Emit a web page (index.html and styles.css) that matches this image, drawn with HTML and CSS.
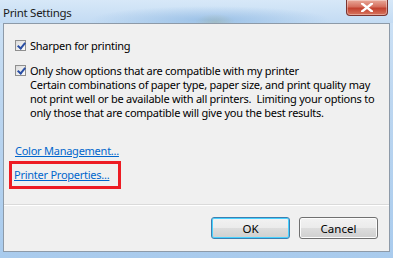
FILE: index.html
```html
<!DOCTYPE html>
<html lang="en">
<head>
    <meta charset="UTF-8">
    <title>Print Settings</title>
    <link rel="stylesheet" href="styles.css">
</head>
<body>
    <div class="window">
        <div class="titlebar">
            <span class="title">Print Settings</span>
            <button class="close-btn" aria-label="Close">
                <svg width="12" height="9" viewBox="0 0 12 9">
                    <path d="M1 0.5 L11 8.5 M11 0.5 L1 8.5" stroke="#fff" stroke-width="2.4" stroke-linecap="square"/>
                </svg>
            </button>
        </div>
        <div class="client">
            <div class="options">
                <label class="check-row">
                    <span class="checkbox checked"></span>
                    <span>Sharpen for printing</span>
                </label>
                <label class="check-row">
                    <span class="checkbox checked"></span>
                    <span>
                        Only show options that are compatible with my printer
                        <span class="note">Certain combinations of paper type, paper size, and print quality may not print well or be available with all printers.&nbsp; Limiting your options to only those that are compatible will give you the best results.</span>
                    </span>
                </label>
            </div>
            <div class="links">
                <a href="#" class="link">Color Management...</a>
                <div class="highlight">
                    <a href="#" class="link">Printer Properties...</a>
                </div>
            </div>
            <div class="footer">
                <button class="btn default">OK</button>
                <button class="btn">Cancel</button>
            </div>
        </div>
    </div>
</body>
</html>
```
FILE: styles.css
```css
html, body {
    margin: 0;
    padding: 0;
}
body {
    font-family: "Noto Sans", "DejaVu Sans", sans-serif;
    font-size: 11px;
    letter-spacing: -0.25px;
    color: #000;
    width: 393px;
    height: 258px;
    overflow: hidden;
}
.window {
    width: 393px;
    height: 258px;
    box-sizing: border-box;
    display: flex;
    flex-direction: column;
    background: linear-gradient(180deg, #cfe3f6 0%, #bcd6f0 40%, #a9cbed 100%);
}
.titlebar {
    height: 23px;
    display: flex;
    align-items: flex-start;
    justify-content: space-between;
    background:
        radial-gradient(ellipse 120px 14px at 210px 20px, rgba(120,170,220,0.55), rgba(120,170,220,0) 100%),
        radial-gradient(ellipse 20px 8px at 215px 22px, rgba(200,190,120,0.5), rgba(200,190,120,0) 100%),
        linear-gradient(180deg, #d7e8f8, #c3dbf3);
}
.title {
    padding: 5px 0 0 3px;
    font-size: 11.5px;
    letter-spacing: -0.3px;
    color: #1b1b1b;
}
.close-btn {
    width: 42px;
    height: 16px;
    margin-right: 5px;
    padding: 0;
    border: 1px solid #7a3430;
    border-top: none;
    border-radius: 0 0 4px 4px;
    background: linear-gradient(180deg, #e9a99a 0%, #d56e5d 45%, #c2412f 55%, #d8765f 100%);
    box-shadow: inset 0 0 0 1px rgba(255,255,255,0.35);
    display: flex;
    align-items: center;
    justify-content: center;
}
.client {
    flex: 1;
    margin: 0 3px 6px 3px;
    border: 1px solid #8d9aa8;
    background: #f0f0f0;
    display: flex;
    flex-direction: column;
}
.options {
    padding: 15px 0 0 11px;
}
.check-row {
    display: flex;
    gap: 4px;
    line-height: 14px;
    margin-bottom: 11px;
}
.checkbox {
    flex: none;
    width: 11px;
    height: 11px;
    margin-top: 1px;
    border: 1px solid #8f8f8f;
    background: linear-gradient(135deg, #dcdcdc, #fbfbfb);
    box-sizing: border-box;
    position: relative;
}
.checkbox.checked::after {
    content: "";
    position: absolute;
    left: 3px;
    top: 0px;
    width: 3px;
    height: 6px;
    border: solid #2a4fa5;
    border-width: 0 2px 2px 0;
    transform: rotate(40deg);
}
.note {
    display: block;
}
.links {
    padding: 13px 0 0 5px;
    display: flex;
    flex-direction: column;
    align-items: flex-start;
}
.link {
    color: #0066cc;
    text-decoration: underline;
    font-size: 11px;
    line-height: 14px;
    margin-left: 6px;
}
.highlight {
    margin-top: 3px;
    border: 3px solid #ed1c24;
    padding: 3px 9px 4px 0;
}
.highlight .link {
    margin-left: 2px;
}
.footer {
    margin-top: auto;
    height: 46px;
    border-top: 1px solid #dadada;
    box-shadow: inset 0 1px 0 #fff;
    display: flex;
    justify-content: flex-end;
    align-items: center;
    gap: 9px;
    padding-right: 11px;
}
.btn {
    width: 79px;
    height: 22px;
    font-family: inherit;
    font-size: 11.5px;
    letter-spacing: 0;
    border: 1px solid #707070;
    border-radius: 3px;
    background: linear-gradient(180deg, #f2f2f2 0%, #ebebeb 50%, #dddddd 51%, #cfcfcf 100%);
    box-shadow: inset 0 0 0 1px #fcfcfc;
    padding: 0;
}
.btn.default {
    border-color: #3c7fb1;
    box-shadow: inset 0 0 0 1px #48d1ff;
}
```
